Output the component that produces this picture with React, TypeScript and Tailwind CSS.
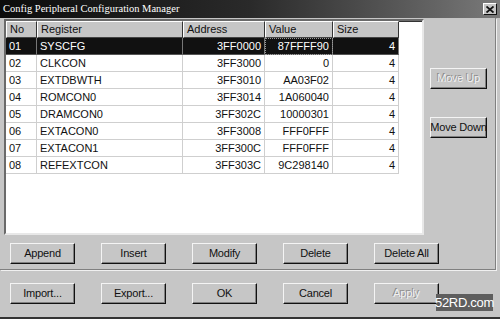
import React from 'react';

const rows = [
  ['01', 'SYSCFG', '3FF0000', '87FFFF90', '4'],
  ['02', 'CLKCON', '3FF3000', '0', '4'],
  ['03', 'EXTDBWTH', '3FF3010', 'AA03F02', '4'],
  ['04', 'ROMCON0', '3FF3014', '1A060040', '4'],
  ['05', 'DRAMCON0', '3FF302C', '10000301', '4'],
  ['06', 'EXTACON0', '3FF3008', 'FFF0FFF', '4'],
  ['07', 'EXTACON1', '3FF300C', 'FFF0FFF', '4'],
  ['08', 'REFEXTCON', '3FF303C', '9C298140', '4'],
];

const cols = [
  { label: 'No', w: 'w-[31px]', right: false },
  { label: 'Register', w: 'w-[146px]', right: false },
  { label: 'Address', w: 'w-[82px]', right: true },
  { label: 'Value', w: 'w-[68px]', right: true },
  { label: 'Size', w: 'w-[66px]', right: true },
];

function Btn({ label, disabled, w = 'w-[65px]' }: { label: string; disabled?: boolean; w?: string }) {
  return (
    <div
      className={`${w} h-[21px] flex items-center justify-center whitespace-nowrap bg-[#c6c6c6] border border-t-[#f4f4f4] border-l-[#f4f4f4] border-r-[#111] border-b-[#111] shadow-[inset_-1px_-1px_#808080] text-[11px] tracking-[-0.2px] ${
        disabled ? 'text-[#f0f0f0] [text-shadow:-1px_-1px_#8a8a8a]' : 'text-[#111]'
      }`}
    >
      {label}
    </div>
  );
}

function Table() {
  return (
    <div className="w-[420px] h-[216px] bg-white border-2 border-t-[#6a6a6a] border-l-[#6a6a6a] border-r-[#e8e8e8] border-b-[#e8e8e8] overflow-hidden">
      <div className="flex h-[17px] bg-[#c6c6c6]">
        {cols.map((c) => (
          <div
            key={c.label}
            className={`${c.w} h-full px-[3px] flex items-center text-[11px] text-[#111] border-t border-l border-t-white border-l-white border-r border-b border-r-[#333] border-b-[#444]`}
          >
            {c.label}
          </div>
        ))}
        <div className="flex-1 bg-white border-t border-t-[#333]" />
      </div>
      {rows.map((r, i) => {
        const sel = i === 0;
        return (
          <div key={r[0]} className={`flex w-fit h-[17px] ${sel ? 'bg-[#111] text-white' : 'text-[#111]'}`}>
            {r.map((v, j) => (
              <div
                key={j}
                className={`${cols[j].w} h-full px-[3px] flex items-center ${
                  cols[j].right ? 'justify-end' : 'justify-start'
                } text-[11px] border-r border-b ${sel ? 'border-r-[#777] border-b-[#555]' : 'border-r-[#cfcfcf] border-b-[#cfcfcf]'} ${
                  sel && j === 3 ? 'outline outline-1 outline-dotted outline-[#999] -outline-offset-1' : ''
                }`}
              >
                {v}
              </div>
            ))}
          </div>
        );
      })}
    </div>
  );
}

export default function App() {
  return (
    <div
      className="relative w-[500px] h-[319px] bg-[#c6c6c6] flex flex-col overflow-hidden border-b-2 border-b-[#333]"
      style={{ fontFamily: '"Liberation Sans", Arial, sans-serif' }}
    >
      <div className="h-[18px] flex items-center justify-between pl-[3px] pr-[3px] bg-gradient-to-r from-[#0c0c0c] via-[#2a2a2a] to-[#7a7a7a]">
        <span className="text-white text-[10.5px] leading-none" style={{ fontFamily: '"Liberation Serif", "Times New Roman", serif' }}>
          Config Peripheral Configuration Manager
        </span>
        <div className="w-[14px] h-[12px] bg-[#c6c6c6] border border-t-white border-l-white border-r-[#111] border-b-[#111] flex items-center justify-center">
          <svg width="8" height="7" viewBox="0 0 8 7">
            <path d="M0.5 0.5 L7.5 6.5 M7.5 0.5 L0.5 6.5" stroke="#111" strokeWidth="1.8" />
          </svg>
        </div>
      </div>

      <div className="w-[496px] h-[252px] flex flex-col border-r border-b border-r-[#808080] border-b-[#808080] shadow-[1px_1px_#f0f0f0]">
        <div className="flex pt-[1px] pl-[4px]">
          <Table />
          <div className="ml-[6px] pt-[49px] flex flex-col gap-[28px]">
            <Btn label="Move Up" disabled w="w-[57px]" />
            <Btn label="Move Down" w="w-[57px]" />
          </div>
        </div>
        <div className="flex gap-[26px] pl-[10px] mt-[8px]">
          <Btn label="Append" />
          <Btn label="Insert" />
          <Btn label="Modify" />
          <Btn label="Delete" />
          <Btn label="Delete All" />
        </div>
      </div>

      <div className="flex gap-[26px] pl-[10px] mt-[13px]">
        <Btn label="Import..." />
        <Btn label="Export..." />
        <Btn label="OK" />
        <Btn label="Cancel" />
        <Btn label="Apply" disabled />
      </div>

      <div className="absolute left-[436px] top-[294px] w-[57px] h-[17px] bg-[#5e5e5e] flex items-center justify-center text-white text-[13px] tracking-[-0.3px]">
        52RD.com
      </div>
    </div>
  );
}
